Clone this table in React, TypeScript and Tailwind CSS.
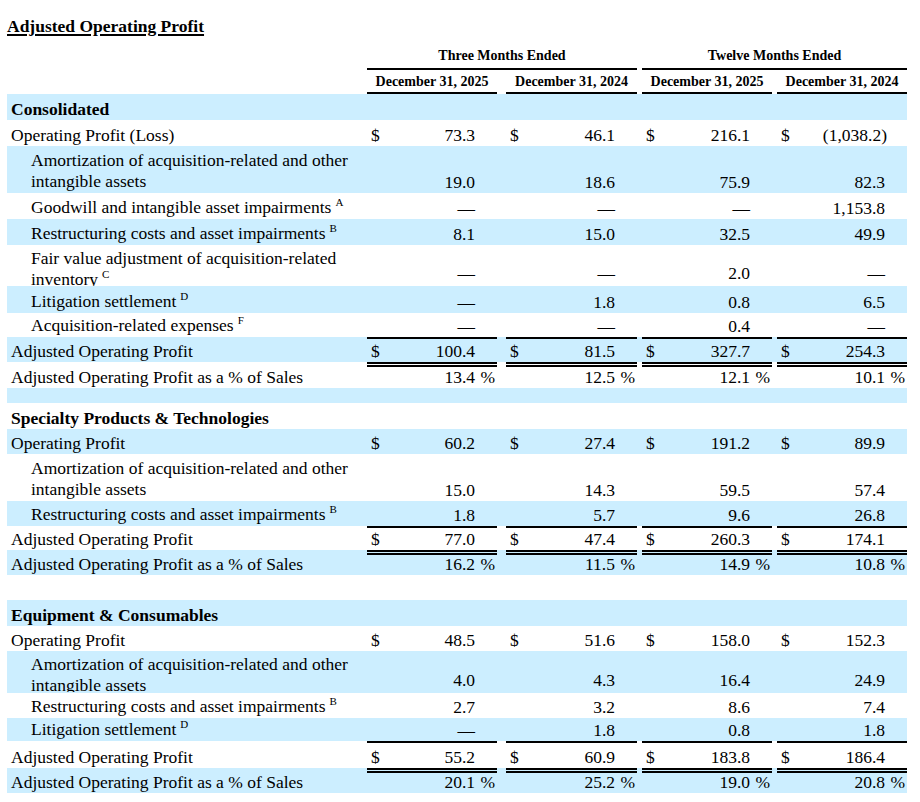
import React from "react";

type Cell = { v: string; s?: string; vc?: string };

type Row = {
  label?: React.ReactNode;
  head?: boolean;
  indent?: boolean;
  h: string;
  dollar?: boolean;
  line?: "single" | "double";
  cells?: Cell[];
  labelCls?: string;
  valCls?: string;
};

const Sup = ({ c }: { c: string }) => (
  <sup className="relative -top-[7px] ml-[4px] align-baseline text-[11px] leading-none">
    {c}
  </sup>
);

const vals = (...v: string[]): Cell[] => v.map((x) => ({ v: x }));
const pct = (...v: string[]): Cell[] => v.map((x) => ({ v: x, s: "%" }));
const D = "—";

const amort = (
  <>
    Amortization of acquisition-related and other
    <br />
    intangible assets
  </>
);

const rows: Row[] = [
  { label: "Consolidated", head: true, h: "h-[26px]" },
  {
    label: "Operating Profit (Loss)",
    h: "h-[26px]",
    dollar: true,
    cells: [{ v: "73.3" }, { v: "46.1" }, { v: "216.1" }, { v: "(1,038.2)", vc: "-mr-[2px]" }],
  },
  { label: amort, indent: true, h: "h-[47px]", cells: vals("19.0", "18.6", "75.9", "82.3") },
  {
    label: (
      <>
        Goodwill and intangible asset impairments
        <Sup c="A" />
      </>
    ),
    indent: true,
    h: "h-[26px]",
    cells: vals(D, D, D, "1,153.8"),
  },
  {
    label: (
      <>
        Restructuring costs and asset impairments
        <Sup c="B" />
      </>
    ),
    indent: true,
    h: "h-[26px]",
    cells: vals("8.1", "15.0", "32.5", "49.9"),
  },
  {
    label: (
      <>
        Fair value adjustment of acquisition-related
        <br />
        inventory
        <Sup c="C" />
      </>
    ),
    indent: true,
    h: "h-[41px] overflow-hidden",
    labelCls: "self-start pt-[3px]",
    valCls: "pb-[3px]",
    cells: vals(D, D, "2.0", D),
  },
  {
    label: (
      <>
        Litigation settlement
        <Sup c="D" />
      </>
    ),
    indent: true,
    h: "h-[27px]",
    cells: vals(D, "1.8", "0.8", "6.5"),
  },
  {
    label: (
      <>
        Acquisition-related expenses
        <Sup c="F" />
      </>
    ),
    indent: true,
    h: "h-[24px]",
    cells: vals(D, D, "0.4", D),
  },
  {
    label: "Adjusted Operating Profit",
    h: "h-[25px]",
    dollar: true,
    line: "single",
    cells: vals("100.4", "81.5", "327.7", "254.3"),
  },
  {
    label: "Adjusted Operating Profit as a % of Sales",
    h: "h-[26px]",
    line: "double",
    cells: pct("13.4", "12.5", "12.1", "10.1"),
  },
  { h: "h-[15px]" },
  { label: "Specialty Products & Technologies", head: true, h: "h-[26px]" },
  {
    label: "Operating Profit",
    h: "h-[25px]",
    dollar: true,
    cells: vals("60.2", "27.4", "191.2", "89.9"),
  },
  { label: amort, indent: true, h: "h-[47px]", cells: vals("15.0", "14.3", "59.5", "57.4") },
  {
    label: (
      <>
        Restructuring costs and asset impairments
        <Sup c="B" />
      </>
    ),
    indent: true,
    h: "h-[25px]",
    cells: vals("1.8", "5.7", "9.6", "26.8"),
  },
  {
    label: "Adjusted Operating Profit",
    h: "h-[24px]",
    dollar: true,
    line: "single",
    cells: vals("77.0", "47.4", "260.3", "174.1"),
  },
  {
    label: "Adjusted Operating Profit as a % of Sales",
    h: "h-[25px]",
    line: "double",
    cells: pct("16.2", "11.5", "14.9", "10.8"),
  },
  { h: "h-[25px]" },
  { label: "Equipment & Consumables", head: true, h: "h-[26px]" },
  {
    label: "Operating Profit",
    h: "h-[25px]",
    dollar: true,
    cells: vals("48.5", "51.6", "158.0", "152.3"),
  },
  {
    label: amort,
    indent: true,
    h: "h-[42px]",
    labelCls: "self-start pt-[3px] h-[41px] overflow-hidden",
    valCls: "pb-[3px]",
    cells: vals("4.0", "4.3", "16.4", "24.9"),
  },
  {
    label: (
      <>
        Restructuring costs and asset impairments
        <Sup c="B" />
      </>
    ),
    indent: true,
    h: "h-[25px]",
    cells: vals("2.7", "3.2", "8.6", "7.4"),
  },
  {
    label: (
      <>
        Litigation settlement
        <Sup c="D" />
      </>
    ),
    indent: true,
    h: "h-[23px]",
    cells: vals(D, "1.8", "0.8", "1.8"),
  },
  {
    label: "Adjusted Operating Profit",
    h: "h-[27px]",
    dollar: true,
    line: "single",
    cells: vals("55.2", "60.9", "183.8", "186.4"),
  },
  {
    label: "Adjusted Operating Profit as a % of Sales",
    h: "h-[25px]",
    line: "double",
    cells: pct("20.1", "25.2", "19.0", "20.8"),
  },
];

const cellPos = ["w-[130px]", "ml-[9px] w-[131px]", "ml-[5px] w-[130px]", "ml-[5px] w-[130px]"];
const dates = ["December 31, 2025", "December 31, 2024", "December 31, 2025", "December 31, 2024"];

const TableRow = ({ row, blue }: { row: Row; blue: boolean }) => {
  return (
    <div className={`flex items-end ${row.h} ${blue ? "bg-[#cceeff]" : ""}`}>
      <div
        className={`w-[360px] shrink-0 ${row.indent ? "pl-[24px] leading-[21px]" : "pl-[4px] leading-[19px]"} ${
          row.head ? "font-bold" : ""
        } ${row.labelCls ?? "pb-px"}`}
      >
        {row.label}
      </div>
      {row.cells?.map((c, i) => (
        <div
          key={i}
          className={`${cellPos[i]} flex shrink-0 items-end self-stretch ${
            row.line === "single" ? "border-t-2 border-black" : ""
          } ${row.line === "double" ? "border-t-[5px] border-double border-black" : ""}`}
        >
          <div className={`flex w-full items-end leading-[19px] ${row.valCls ?? "pb-px"}`}>
            <span className="w-[14px] shrink-0 pl-1">{row.dollar ? "$" : ""}</span>
            <span className={`flex-1 text-right ${c.vc ?? ""}`}>{c.v}</span>
            <span className={`w-[22px] shrink-0 ${c.s === "%" ? "pr-[2px] text-right" : "text-left"}`}>
              {c.s ?? ""}
            </span>
          </div>
        </div>
      ))}
    </div>
  );
};

const App = () => {
  return (
    <div className="min-h-screen bg-white font-['Liberation_Serif',serif] text-[17.5px] text-black">
      <div className="ml-[7px] w-[900px] pt-[17px]">
        <div className="font-bold leading-[19px]">
          <span className="underline decoration-2 underline-offset-[2px]">Adjusted Operating Profit</span>
        </div>

        {/* period headers */}
        <div className="flex pt-[12px] text-[14px] font-bold leading-[16px]">
          <div className="w-[360px] shrink-0" />
          <div className="w-[270px] shrink-0 border-b-2 border-black pb-[4px] text-center">Three Months Ended</div>
          <div className="ml-[5px] w-[265px] shrink-0 border-b-2 border-black pb-[4px] text-center">
            Twelve Months Ended
          </div>
        </div>
        <div className="flex pt-[4px] text-[14px] font-bold leading-[16px]">
          <div className="w-[360px] shrink-0" />
          {dates.map((d, i) => (
            <div key={i} className={`${cellPos[i]} shrink-0 border-b-2 border-black pb-[2px] text-center`}>
              {d}
            </div>
          ))}
        </div>

        {rows.map((r, i) => (
          <TableRow key={i} row={r} blue={i % 2 === 0} />
        ))}
      </div>
    </div>
  );
};

export default App;
